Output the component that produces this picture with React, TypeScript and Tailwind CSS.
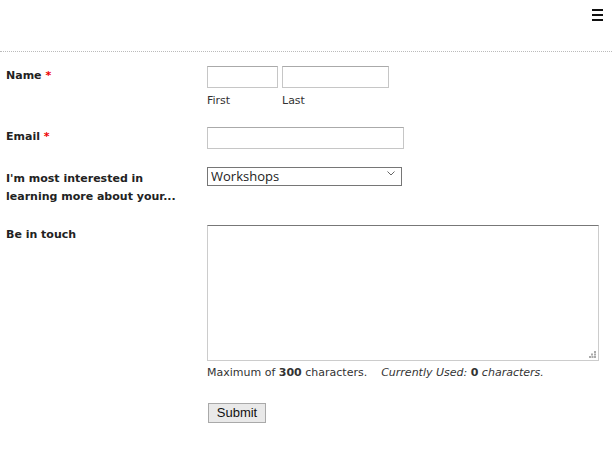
import React from "react";

const label = "text-[11px] leading-[18px] font-bold text-[#222] [font-family:'DejaVu_Sans',sans-serif]";
const help = "text-[11px] leading-[14px] text-[#333] [font-family:'DejaVu_Sans',sans-serif]";
const input = "block h-[22px] border border-[#c6c6c6] border-t-[#aaa] bg-white outline-none";

function Req() {
  return <span className="text-[#e00]"> *</span>;
}

export default function App() {
  return (
    <div className="w-[612px] h-[453px] bg-white overflow-hidden">
      <header className="h-[52px] border-b border-dotted border-[#bbb] flex justify-end pr-[9px] pt-[9px]">
        <svg width="11" height="12" viewBox="0 0 11 12" aria-label="menu">
          <rect x="0" y="0" width="11" height="2" fill="#111" />
          <rect x="0" y="5" width="11" height="2" fill="#111" />
          <rect x="0" y="10" width="11" height="2" fill="#111" />
        </svg>
      </header>

      <form className="pl-[6px]">
        {/* Name */}
        <div className="flex mt-[14px]">
          <div className={`${label} w-[201px] pt-[1px]`}>
            Name<Req />
          </div>
          <div className="flex gap-[4px]">
            <div>
              <input className={`${input} w-[71px]`} />
              <div className={`${help} mt-[6px]`}>First</div>
            </div>
            <div>
              <input className={`${input} w-[107px]`} />
              <div className={`${help} mt-[6px]`}>Last</div>
            </div>
          </div>
        </div>

        {/* Email */}
        <div className="flex mt-[19px]">
          <div className={`${label} w-[201px] pt-[1px]`}>
            Email<Req />
          </div>
          <input className={`${input} w-[197px]`} />
        </div>

        {/* Select */}
        <div className="flex mt-[14px]">
          <div className={`${label} w-[201px] pt-[7px]`}>
            I'm most interested in<br />learning more about your...
          </div>
          <div className="relative w-[195px] h-[19px]">
            <select className="appearance-none w-full h-full border border-[#767676] bg-white pl-[3px] text-[13px] leading-[17px] text-[#222] [font-family:'Open_Sans',sans-serif] outline-none">
              <option>Workshops</option>
            </select>
            <svg className="absolute right-[7px] top-[8px] pointer-events-none" width="8" height="5" viewBox="0 0 8 5">
              <path d="M0.5 0.5 L4 4 L7.5 0.5" fill="none" stroke="#666" strokeWidth="1" />
            </svg>
          </div>
        </div>

        {/* Textarea */}
        <div className="flex mt-[19px]">
          <div className={`${label} w-[201px] pt-[1px]`}>Be in touch</div>
          <div>
            <div className="relative">
              <textarea className="block w-[392px] h-[136px] border border-[#ccc] border-t-[#777] bg-white outline-none resize-none" />
              <svg className="absolute right-[3px] bottom-[3px]" width="7" height="7" viewBox="0 0 7 7">
                <rect x="5" y="0" width="2" height="2" fill="#aaa" />
                <rect x="2" y="2.5" width="2" height="2" fill="#aaa" />
                <rect x="5" y="2.5" width="2" height="2" fill="#aaa" />
                <rect x="0" y="5" width="2" height="2" fill="#aaa" />
                <rect x="2.5" y="5" width="2" height="2" fill="#aaa" />
                <rect x="5" y="5" width="2" height="2" fill="#aaa" />
              </svg>
            </div>
            <div className={`${help} mt-[5px]`}>
              Maximum of <b>300</b> characters.
              <span className="ml-[14px] italic">
                Currently Used: <b className="not-italic">0</b> characters.
              </span>
            </div>
          </div>
        </div>

        <div className="pl-[202px] mt-[19px]">
          <button type="button" className="h-[20px] w-[58px] border border-[#a9a9a9] bg-[#e9e9e9] text-[13px] leading-[18px] text-[#111] [font-family:'Liberation_Sans',sans-serif]">
            Submit
          </button>
        </div>
      </form>
    </div>
  );
}
